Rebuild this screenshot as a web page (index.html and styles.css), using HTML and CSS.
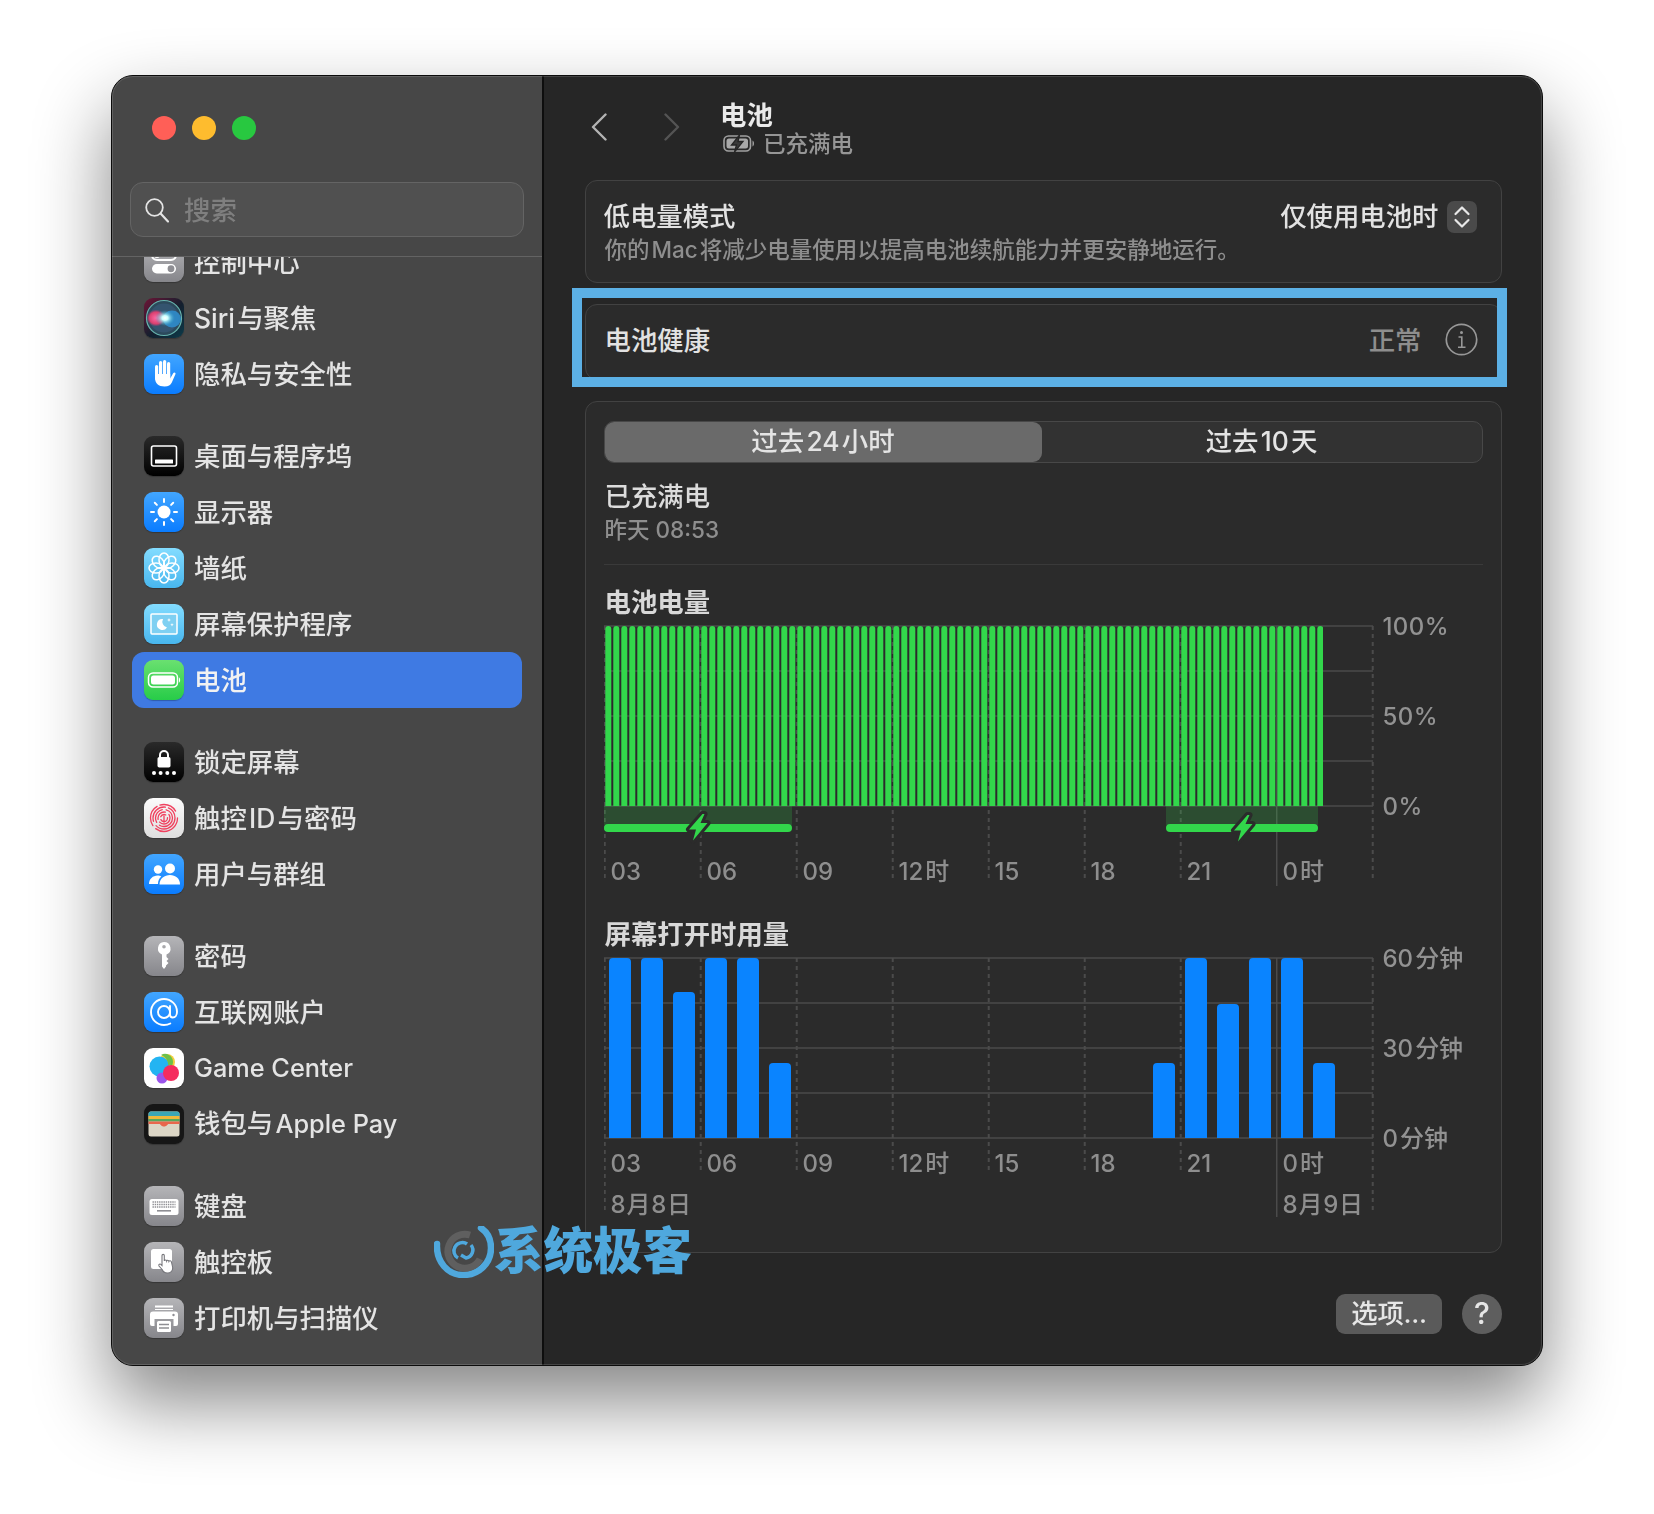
FILE: index.html
```html
<!DOCTYPE html>
<html lang="zh-CN">
<head>
<meta charset="utf-8">
<title>电池</title>
<link rel="stylesheet" href="styles.css">
</head>
<body>
<div class="window">
  <aside class="sidebar">
    <div class="side-head">
      <div class="lights"><i class="light red"></i><i class="light yellow"></i><i class="light green"></i></div>
      <div class="search">
        <svg class="search-ico" viewBox="0 0 24 24"><circle cx="9.5" cy="9.5" r="8.3" fill="none" stroke="#e4e4e4" stroke-width="1.8"/><path d="M15.6 15.6 23 23.4" stroke="#e4e4e4" stroke-width="2.2" stroke-linecap="round"/></svg>
        <span>搜索</span>
      </div>
    </div>
    <nav class="list">
      <div class="group first">
        <div class="row"><span class="ic ic-gray"><svg viewBox="0 0 40 40"><rect x="8" y="8" width="24" height="10" rx="5" fill="none" stroke="#fff" stroke-width="2"/><circle cx="13" cy="13" r="3" fill="#fff"/><rect x="8" y="22" width="24" height="9.500" rx="4.750" fill="#fff"/><circle cx="27" cy="26.750" r="3.400" fill="#8e8e93"/></svg></span><span>控制中心</span></div>
        <div class="row"><span class="ic ic-siri"><svg viewBox="0 0 40 40"><defs><radialGradient id="sg1"><stop offset="0" stop-color="#fff"/><stop offset=".3" stop-color="#cff"/><stop offset="1" stop-color="#2fa6c8" stop-opacity="0"/></radialGradient><radialGradient id="sg2"><stop offset="0" stop-color="#ff6aa5"/><stop offset=".7" stop-color="#d9406f"/><stop offset="1" stop-color="#b8386f" stop-opacity="0"/></radialGradient></defs><circle cx="20" cy="20" r="17.500" fill="#2c4a5c" stroke="#67b3ad" stroke-width="1.200"/><circle cx="20" cy="20" r="14.500" fill="#34546f"/><ellipse cx="12" cy="20" rx="9.500" ry="8.500" fill="url(#sg2)"/><ellipse cx="28" cy="21" rx="9" ry="8.500" fill="#2f8fd0" opacity=".85"/><ellipse cx="21" cy="20" rx="10" ry="8" fill="url(#sg1)"/></svg></span><span>Siri&#8202;与聚焦</span></div>
        <div class="row"><span class="ic ic-blue"><svg viewBox="0 0 40 40"><g fill="#fff"><rect x="11" y="11" width="3.200" height="15" rx="1.600"/><rect x="15" y="7" width="3.200" height="18" rx="1.600"/><rect x="19" y="6" width="3.200" height="18" rx="1.600"/><rect x="23" y="8" width="3.200" height="17" rx="1.600"/><path d="M11 20h15.200v4.500l3-5.300c.9-1.600 3-.6 2.200 1.100l-3.600 8.200C26.500 31 24.500 32.500 20.500 32.500 14.500 32.500 11 29 11 24z"/></g></svg></span><span>隐私与安全性</span></div>
      </div>
      <div class="group">
        <div class="row"><span class="ic ic-black"><svg viewBox="0 0 40 40"><rect x="7.500" y="10" width="25" height="20" rx="2" fill="none" stroke="#fff" stroke-width="1.600"/><rect x="11" y="23.500" width="18" height="4" rx=".6" fill="#fff"/></svg></span><span>桌面与程序坞</span></div>
        <div class="row"><span class="ic ic-blue"><svg viewBox="0 0 40 40"><circle cx="20" cy="20" r="6.500" fill="#fff"/><g stroke="#fff" stroke-width="2" stroke-linecap="round"><path d="M20 7v3M20 30v3M7 20h3M30 20h3M10.800 10.800l2.100 2.100M27.100 27.100l2.100 2.100M29.200 10.800l-2.100 2.100M12.900 27.100l-2.100 2.100"/></g></svg></span><span>显示器</span></div>
        <div class="row"><span class="ic ic-sky"><svg viewBox="0 0 40 40"><g fill="none" stroke="#fff" stroke-width="1.500"><ellipse cx="20" cy="12" rx="5" ry="7"/><ellipse cx="20" cy="28" rx="5" ry="7"/><ellipse cx="12" cy="20" rx="7" ry="5"/><ellipse cx="28" cy="20" rx="7" ry="5"/><ellipse cx="14.300" cy="14.300" rx="5" ry="7" transform="rotate(-45 14.300 14.300)"/><ellipse cx="25.700" cy="25.700" rx="5" ry="7" transform="rotate(-45 25.700 25.700)"/><ellipse cx="25.700" cy="14.300" rx="5" ry="7" transform="rotate(45 25.700 14.300)"/><ellipse cx="14.300" cy="25.700" rx="5" ry="7" transform="rotate(45 14.300 25.700)"/></g></svg></span><span>墙纸</span></div>
        <div class="row"><span class="ic ic-sky"><svg viewBox="0 0 40 40"><rect x="7" y="10" width="26" height="20" rx="1" fill="#7fd0f2" stroke="#fff" stroke-width="1.500"/><path d="M19 15a5.500 5.500 0 1 0 4 8.500 6 6 0 0 1-4-8.500z" fill="#fff"/><path d="M25 14l.6 1.400 1.400.6-1.400.6-.6 1.400-.6-1.400-1.400-.6 1.400-.6zM28 19l.5 1.200 1.200.5-1.200.5-.5 1.200-.5-1.200-1.200-.5 1.200-.5z" fill="#fff"/></svg></span><span>屏幕保护程序</span></div>
        <div class="row selected"><span class="ic ic-green"><svg viewBox="0 0 40 40"><rect x="4.500" y="13" width="29" height="14" rx="4.500" fill="none" stroke="#fff" stroke-width="1.500"/><rect x="7" y="15.500" width="24" height="9" rx="2.500" fill="#fff"/><path d="M35 17.500c1.500.4 1.500 4.600 0 5z" fill="#fff"/></svg></span><span>电池</span></div>
      </div>
      <div class="group">
        <div class="row"><span class="ic ic-black"><svg viewBox="0 0 40 40"><path d="M16 16v-3a4 4 0 0 1 8 0v3" fill="none" stroke="#fff" stroke-width="2"/><rect x="13.500" y="15" width="13" height="10.500" rx="1.800" fill="#fff"/><g fill="#fff"><circle cx="10" cy="31" r="2"/><circle cx="16.600" cy="31" r="2"/><circle cx="23.300" cy="31" r="2"/><circle cx="30" cy="31" r="2"/></g></svg></span><span>锁定屏幕</span></div>
        <div class="row"><span class="ic ic-white"><svg viewBox="0 0 40 40"><g fill="none" stroke="#f0405e" stroke-width="1.300" stroke-linecap="round"><circle cx="20" cy="20" r="13.500" stroke-dasharray="30 4 22 3 18 8"/><circle cx="20" cy="20" r="11" stroke-dasharray="26 5 22 3"/><circle cx="20" cy="20" r="8.500" stroke-dasharray="18 4 16 4"/><circle cx="20" cy="20" r="6" stroke-dasharray="14 3 12 4"/><circle cx="20" cy="20" r="3.500" stroke-dasharray="9 3 6 3"/><path d="M20 18v6"/></g></svg></span><span>触控&#8202;ID&#8202;与密码</span></div>
        <div class="row"><span class="ic ic-blue"><svg viewBox="0 0 40 40"><g fill="#fff"><circle cx="14" cy="15.500" r="4.200"/><circle cx="26" cy="14.500" r="5"/><path d="M5 30c0-5 4-8.500 8.500-8.500 1.600 0 2.800.4 3.800 1-2.200 1.900-3.300 4.400-3.300 7.500z"/><path d="M15.500 30.500c0-6 5-9.500 10.500-9.500s10 3.500 10 9.500z"/></g></svg></span><span>用户与群组</span></div>
      </div>
      <div class="group">
        <div class="row"><span class="ic ic-gray"><svg viewBox="0 0 40 40"><path fill="#fff" fill-rule="evenodd" d="M20 6a6.500 6.500 0 0 1 2.500 12.500V21l2 2-2 2 2 2-2.500 2.500v1L20 33l-2-2.500V18.500A6.500 6.500 0 0 1 20 6zm0 3a1.800 1.800 0 1 0 0 3.600A1.800 1.800 0 0 0 20 9z"/></svg></span><span>密码</span></div>
        <div class="row"><span class="ic ic-blue"><svg viewBox="0 0 40 40"><g fill="none" stroke="#fff" stroke-width="1.900" stroke-linecap="round"><circle cx="20" cy="20" r="6"/><path d="M26 14v8.500c0 2 1.300 3 2.800 3 2.400 0 4.200-2.500 4.200-5.800C33 12.500 27 7 20 7 12.500 7 7 13 7 20s5.500 13 13 13c2.500 0 4.500-.5 6.300-1.500"/></g></svg></span><span>互联网账户</span></div>
        <div class="row"><span class="ic ic-white2"><svg viewBox="0 0 40 40"><circle cx="23" cy="14" r="8" fill="#f4cf3c"/><circle cx="15.500" cy="18.500" r="10" fill="#23b4f2"/><path d="M17 7a8 8 0 0 1 12 7 8 8 0 0 1-1 3.800 8 8 0 0 0-4-1 10 10 0 0 0-7-9.800z" fill="#6cc04a"/><circle cx="18" cy="30" r="5.500" fill="#9a54ea"/><circle cx="27" cy="25" r="8" fill="#f52c5e"/></svg></span><span class="lat">Game Center</span></div>
        <div class="row"><span class="ic ic-black ic-wallet"><svg viewBox="0 0 40 40"><rect x="4.500" y="7.500" width="31" height="25" rx="2.500" fill="#dcd6c6"/><path d="M4.500 10a2.500 2.500 0 0 1 2.500-2.500h26a2.500 2.500 0 0 1 2.500 2.500v2h-31z" fill="#3aa7b5"/><rect x="4.500" y="12" width="31" height="3" fill="#eeb93a"/><rect x="4.500" y="15" width="31" height="2.500" fill="#56a85c"/><path d="M4.500 17.500h31V20H24.500c-1 0-1.500 2.500-4.500 2.500S16.500 20 15.500 20h-11z" fill="#e9664c"/></svg></span><span>钱包与&#8202;<span class="lat">Apple Pay</span></span></div>
      </div>
      <div class="group">
        <div class="row"><span class="ic ic-gray"><svg viewBox="0 0 40 40"><rect x="5.500" y="13" width="29" height="16" rx="2.500" fill="#fff"/><g fill="none" stroke="#8e8e93" stroke-width="1.300" stroke-dasharray="1.400 .8"><path d="M8.500 16h23M8.500 18.500h23M8.500 21h23"/></g><rect x="13" y="24" width="14" height="1.600" fill="#8e8e93"/></svg></span><span>键盘</span></div>
        <div class="row"><span class="ic ic-gray"><svg viewBox="0 0 40 40"><rect x="7" y="7" width="21" height="20" rx="2.500" fill="#fff"/><path d="M18 13.500c0-1.500 2.300-1.500 2.300 0V19c.2-1.300 2-1.300 2.300 0 .3-1 2-1 2.300.3.300-.8 2.200-.8 2.500.5.500 2.500 1.200 4 1.300 6.200.1 3-2 5-5.300 5-3.400 0-4.600-1.600-5.300-3.500L15 24c-.8-1.600 1-2.600 2-1.500l1 1z" fill="#fff" stroke="#77777c" stroke-width="1.100"/></svg></span><span>触控板</span></div>
        <div class="row"><span class="ic ic-gray"><svg viewBox="0 0 40 40"><path d="M11 7.500h18v2H11zM11 11h18v1H11z" fill="#fff"/><path d="M9 13.500h22a3 3 0 0 1 3 3V26a2 2 0 0 1-2 2h-2.500v-7h-19v7H8a2 2 0 0 1-2-2v-9.500a3 3 0 0 1 3-3z" fill="#fff"/><rect x="13" y="23" width="14" height="11" rx="1.500" fill="#fff"/><path d="M15 26.500h10M15 30h10" stroke="#8e8e93" stroke-width="1.500"/><circle cx="29.500" cy="17" r="1.200" fill="#8e8e93"/></svg></span><span>打印机与扫描仪</span></div>
      </div>
    </nav>
  </aside>

  <main class="main">
    <header class="top">
      <svg class="chev" viewBox="0 0 16 28"><path d="M14.500 1.500 2 14l12.500 12.500" fill="none" stroke="#b3b3b3" stroke-width="2.400" stroke-linecap="round" stroke-linejoin="round"/></svg>
      <svg class="chev chev-next" viewBox="0 0 16 28"><path d="M1.500 1.500 14 14 1.500 26.500" fill="none" stroke="#545454" stroke-width="2.400" stroke-linecap="round" stroke-linejoin="round"/></svg>
      <div class="heading">
        <div class="title">电池</div>
        <div class="subtitle">
          <svg class="bat" viewBox="0 0 32 17"><rect x="1" y="1" width="26.500" height="15" rx="4.500" fill="#2a2a2a" stroke="#a0a0a0" stroke-width="1.600"/><rect x="3.500" y="3.500" width="21.500" height="10" rx="2.500" fill="#a8a8a8"/><path d="M16.500 0 8.500 10h5L11.500 17l8.500-10.500h-5z" fill="#3a3a3a" stroke="#262626" stroke-width="1.300"/><path d="M29.500 5.500c2 .7 2 5.300 0 6z" fill="#a0a0a0"/></svg>
          <span>已充满电</span>
        </div>
      </div>
    </header>

    <section class="card card-low">
      <div class="low-row">
        <span class="label">低电量模式</span>
        <span class="picker"><span>仅使用电池时</span>
          <svg class="stepper" viewBox="0 0 30 32"><path d="M8.500 13 15 6.500l6.500 6.500M8.500 19l6.500 6.500 6.500-6.500" fill="none" stroke="#e8e8e8" stroke-width="2.200" stroke-linecap="round" stroke-linejoin="round"/></svg>
        </span>
      </div>
      <p class="desc">你的&#8202;Mac&#8202;将减少电量使用以提高电池续航能力并更安静地运行。</p>
    </section>

    <section class="card card-health">
      <span class="label">电池健康</span>
      <span class="status">正常</span>
      <svg class="info" viewBox="0 0 33 33"><circle cx="16.500" cy="16.500" r="15.200" fill="none" stroke="#989898" stroke-width="1.700"/><circle cx="16.500" cy="9.500" r="1.500" fill="#989898"/><path d="M13.500 14h3.300v10M13 24.200h7.500" fill="none" stroke="#989898" stroke-width="1.600"/></svg>
      <div class="mark"></div>
    </section>

    <section class="card card-usage">
      <div class="seg">
        <div class="seg-item on">过去&#8202;24&#8202;小时</div>
        <div class="seg-item">过去&#8202;10&#8202;天</div>
      </div>
      <div class="state">已充满电</div>
      <div class="state-time">昨天 08:53</div>
      <hr class="rule">

      <h2 class="chart-title">电池电量</h2>
      <div class="chart">
        <svg class="plot plot-a" viewBox="0 0 770 262">
          <defs>
            <pattern id="gb" width="8" height="180" patternUnits="userSpaceOnUse" x="0" y="1"><path d="M1.300 180V3a3 3 0 0 1 6 0v177z" fill="#32d74b"/></pattern>
            <path id="bolt" d="M4.500-12-9 3.500h7L-5 14.500 9.500-3H2.500L6.500-12z" fill="#32d74b" stroke="#2b2b2b" stroke-width="6" stroke-linejoin="round" paint-order="stroke"/>
          </defs>
          <g class="gh"><path d="M0 1H769M0 46H769M0 91H769M0 136H769M0 181H769"/></g>
          <g class="gv"><path d="M.75 1V257M96.750 1V257M192.750 1V257M288.750 1V257M384.750 1V257M480.750 1V257M576.750 1V257M768.750 1V257"/></g>
          <path class="gs" d="M672.750 1V261"/>
          <rect x="0" y="1" width="719" height="180" fill="url(#gb)"/>
          <rect class="chg-bg" x="0" y="181" width="188" height="19"/>
          <rect class="chg-bg" x="562" y="181" width="152" height="19"/>
          <rect class="chg" x="0" y="199" width="188" height="8" rx="4"/>
          <rect class="chg" x="562" y="199" width="152" height="8" rx="4"/>
          <use href="#bolt" x="94" y="201"/>
          <use href="#bolt" x="639" y="202"/>
        </svg>
        <div class="axis axis-pct"><span>100%</span><span>50%</span><span>0%</span></div>
      </div>
      <div class="ticks ticks-a"><span>03</span><span>06</span><span>09</span><span>12&#8202;时</span><span>15</span><span>18</span><span>21</span><span>0&#8202;时</span></div>

      <h2 class="chart-title title-b">屏幕打开时用量</h2>
      <div class="chart">
        <svg class="plot plot-b" viewBox="0 0 770 260">
          <g class="gh"><path d="M0 1H769M0 46H769M0 91H769M0 136H769M0 181H769"/></g>
          <g class="gv"><path d="M.75 1V256M96.750 1V216M192.750 1V216M288.750 1V216M384.750 1V216M480.750 1V216M576.750 1V216M768.750 1V256"/></g>
          <path class="gs" d="M672.750 1V260"/>
          <g class="blue">
            <path d="M5 181V5a4 4 0 0 1 4-4h14a4 4 0 0 1 4 4v176z"/>
            <path d="M37 181V5a4 4 0 0 1 4-4h14a4 4 0 0 1 4 4v176z"/>
            <path d="M69 181V39a4 4 0 0 1 4-4h14a4 4 0 0 1 4 4v142z"/>
            <path d="M101 181V5a4 4 0 0 1 4-4h14a4 4 0 0 1 4 4v176z"/>
            <path d="M133 181V5a4 4 0 0 1 4-4h14a4 4 0 0 1 4 4v176z"/>
            <path d="M165 181V110a4 4 0 0 1 4-4h14a4 4 0 0 1 4 4v71z"/>
            <path d="M549 181V110a4 4 0 0 1 4-4h14a4 4 0 0 1 4 4v71z"/>
            <path d="M581 181V5a4 4 0 0 1 4-4h14a4 4 0 0 1 4 4v176z"/>
            <path d="M613 181V51a4 4 0 0 1 4-4h14a4 4 0 0 1 4 4v130z"/>
            <path d="M645 181V5a4 4 0 0 1 4-4h14a4 4 0 0 1 4 4v176z"/>
            <path d="M677 181V5a4 4 0 0 1 4-4h14a4 4 0 0 1 4 4v176z"/>
            <path d="M709 181V110a4 4 0 0 1 4-4h14a4 4 0 0 1 4 4v71z"/>
          </g>
        </svg>
        <div class="axis"><span>60&#8202;分钟</span><span>30&#8202;分钟</span><span>0&#8202;分钟</span></div>
      </div>
      <div class="ticks ticks-b"><span>03</span><span>06</span><span>09</span><span>12&#8202;时</span><span>15</span><span>18</span><span>21</span><span>0&#8202;时</span></div>
      <div class="ticks dates"><span>8月8日</span><span class="date-end">8月9日</span></div>
    </section>

    <footer class="actions">
      <button class="btn">选项...</button>
      <button class="help">?</button>
    </footer>
  </main>

  <div class="watermark">
    <svg class="wm-logo" viewBox="0 0 60 52"><path d="M3 18C2 36 14 49 29 49 44 49 57 38 57 22 57 13 53 6 47 2" fill="none" stroke="#4fa8dd" stroke-width="6.500" stroke-linecap="round"/><path d="M46 33A17 17 0 1 1 36 9" fill="none" stroke="#5f5f5f" stroke-width="7"/><path d="M24 32a8 8 0 0 1-3-11c2-4 8-6 12-3M37 19a8 8 0 0 1-5 13l-5-3" fill="none" stroke="#4fa8dd" stroke-width="3.500"/></svg>
    <span>系统极客</span>
  </div>
</div>
</body>
</html>
```

FILE: styles.css
```css
* { box-sizing: border-box; }
html, body { margin: 0; padding: 0; }
body {
  width: 1654px;
  height: 1514px;
  padding: 75px 111px 0;
  background: #fff;
  overflow: hidden;
  font-family: Inter, "Noto Sans CJK SC", sans-serif;
  font-size: 26.4px;
  line-height: 36px;
  font-weight: 500;
  color: #e2e2e2;
}
.window {
  position: relative;
  width: 1432px;
  height: 1291px;
  display: flex;
  border: 1px solid #0c0c0c;
  border-radius: 22px;
  background: #262626;
  filter: drop-shadow(0 36px 38px rgba(0,0,0,.48));
}
.window::after {
  content: "";
  position: absolute;
  inset: 0;
  border-radius: 21px;
  box-shadow: inset 0 0 0 1px rgba(255,255,255,.14);
  pointer-events: none;
}

/* sidebar */
.sidebar {
  width: 432px;
  flex: none;
  display: flex;
  flex-direction: column;
  background: #474747;
  border-right: 2px solid #0e0e0e;
  border-radius: 21px 0 0 21px;
  overflow: hidden;
}
.side-head {
  padding: 40px 18px 19px;
  border-bottom: 1.5px solid #636363;
  flex: none;
}
.lights { display: flex; gap: 16px; padding-left: 22px; }
.light { width: 24px; height: 24px; border-radius: 50%; }
.red { background: #ff5f57; }
.yellow { background: #febc2e; }
.green { background: #28c840; }
.search {
  margin-top: 42px;
  height: 55px;
  display: flex;
  align-items: center;
  gap: 15px;
  padding-left: 14px;
  background: #505050;
  border: 1px solid #646464;
  border-radius: 13px;
  color: #7f7f7f;
}
.search-ico { width: 24px; height: 26px; flex: none; }
.list { flex: 1; overflow: hidden; }
.group { margin-bottom: 26px; }
.group.first { margin-top: -23.5px; }
.row {
  height: 56px;
  margin: 0 20px;
  padding-left: 12px;
  display: flex;
  align-items: center;
  gap: 10px;
  border-radius: 12px;
  color: #e4e4e4;
  white-space: pre;
}
.row.selected { background: #3f7ae3; color: #f2f2f2; }
.lat { font-size: 25.3px; }
.ic {
  width: 40px;
  height: 40px;
  flex: none;
  border-radius: 9px;
  display: block;
  box-shadow: 0 1px 1px rgba(0,0,0,.25);
}
.ic svg { display: block; width: 40px; height: 40px; }
.ic-gray { background: linear-gradient(#b5b5b8, #86868b); }
.ic-blue { background: linear-gradient(#42a6ff, #0a7cff); }
.ic-black { background: linear-gradient(#2a2a2a, #000); }
.ic-sky { background: linear-gradient(#83dcff, #48b6ee); }
.ic-green { background: linear-gradient(#6ae070, #27cc48); }
.ic-white { background: linear-gradient(#fbfbfb, #dedede); }
.ic-white2 { background: #fff; }
.ic-siri { background: linear-gradient(135deg, #6d1436, #131f2e 55%, #0c3b4a); }
.ic-wallet { background: #161616; }

/* main */
.main {
  flex: 1;
  min-width: 0;
  padding: 0 39px 0 40.5px;
  display: flex;
  flex-direction: column;
}
.top {
  height: 104px;
  flex: none;
  display: flex;
  align-items: center;
  padding-left: 6px;
}
.chev { width: 16px; height: 28px; flex: none; margin-top: -2px; }
.chev-next { margin-left: 57px; }
.heading { margin-left: 40.5px; }
.title { font-size: 26.4px; line-height: 32px; font-weight: 700; color: #eaeaea; }
.subtitle {
  display: flex;
  align-items: center;
  gap: 8px;
  height: 28px;
  margin-top: -1px;
  margin-left: 3px;
  font-size: 22.5px;
  line-height: 28px;
  color: #969696;
}
.bat { width: 32px; height: 17px; flex: none; }

.card {
  width: 917.5px;
  flex: none;
  background: #2b2b2b;
  border: 1.5px solid #424242;
  border-radius: 12px;
}
.card-low { height: 103px; padding: 17px 24.5px 0 18px; }
.low-row { display: flex; justify-content: space-between; align-items: center; height: 36px; }
.label { color: #e2e2e2; }
.picker { display: flex; align-items: center; gap: 8px; color: #e2e2e2; }
.stepper { width: 30px; height: 32px; background: #4a4a4a; border-radius: 7px; margin-top: 1px; }
.desc { margin: 1px 0 0; padding-left: 1px; font-size: 22.5px; line-height: 30px; color: #8e8e8e; white-space: pre; }

.card-health {
  position: relative;
  height: 76px;
  margin-top: 21px;
  padding: 0 23.5px 5px 19px;
  display: flex;
  align-items: center;
}
.status { margin-left: auto; color: #8e8e8e; }
.info { width: 33px; height: 33px; margin-left: 23px; flex: none; }
.mark {
  position: absolute;
  top: -17.5px;
  left: -14px;
  right: -5.5px;
  bottom: -7.5px;
  border: 10px solid #5cb0e5;
}

.card-usage {
  height: 852px;
  margin-top: 21px;
  padding: 18.5px 18.5px 0 18px;
}
.seg {
  height: 42px;
  display: flex;
  background: #323232;
  border: 1px solid #484848;
  border-radius: 10px;
}
.seg-item {
  flex: 1;
  display: flex;
  align-items: center;
  justify-content: center;
  padding-bottom: 2px;
  border-radius: 9px;
  color: #e4e4e4;
  white-space: pre;
}
.seg-item.on { flex: 0 0 437px; background: #6a6a6a; }
.state { margin-top: 15px; margin-bottom: 1px; padding-left: 1px; color: #dcdcdc; }
.state-time { font-size: 22.5px; line-height: 30px; padding-left: 1px; color: #8e8e8e; }
.rule { margin: 19px 0 19px; border: 0; border-top: 1.5px solid #3a3a3a; }
.chart-title { margin: 0 0 5px; padding-left: 1px; font-size: 26.4px; line-height: 36px; font-weight: 700; color: #d8d8d8; }
.chart { display: flex; align-items: flex-start; }
.plot { display: block; width: 770px; flex: none; }
.plot-a { height: 262px; }
.plot-b { height: 260px; }
.gh path { stroke: #4b4b4b; stroke-width: 1.5; fill: none; }
.gv path { stroke: #4b4b4b; stroke-width: 2; stroke-dasharray: 4 4; fill: none; }
.gs { stroke: #4b4b4b; stroke-width: 1.5; fill: none; }
.chg-bg { fill: rgba(50, 215, 75, .2); }
.chg { fill: #32d74b; }
.blue path { fill: #0a84ff; }
.axis {
  height: 204px;
  margin: -10px 0 0 9px;
  display: flex;
  flex-direction: column;
  justify-content: space-between;
  font-size: 24px;
  line-height: 24px;
  font-weight: 500;
  color: #929292;
  white-space: pre;
}
.axis-pct { letter-spacing: .4px; }
.ticks {
  display: grid;
  grid-template-columns: repeat(8, 96px);
  padding-left: 7px;
  height: 30px;
  font-size: 24px;
  line-height: 30px;
  font-weight: 500;
  color: #8e8e8e;
  white-space: pre;
}
.ticks-a { margin-top: -30px; }
.ticks-b { margin-top: -68px; }
.title-b { margin-top: 29px; }
.dates { margin-top: 11px; letter-spacing: .8px; }
.date-end { grid-column: 8; }

.actions {
  margin-top: 41px;
  width: 917.5px;
  display: flex;
  justify-content: flex-end;
  gap: 20px;
}
.btn {
  width: 106px;
  height: 40px;
  padding: 0 0 3px;
  border: 0;
  border-radius: 9px;
  background: #5a5a5a;
  color: #e6e6e6;
  font: inherit;
  letter-spacing: -.3px;
}
.help {
  width: 40px;
  height: 40px;
  padding: 0 0 3px;
  border: 0;
  border-radius: 50%;
  background: #5e5e5e;
  color: #e6e6e6;
  font: inherit;
  font-size: 30px;
}

/* watermark lying over the window */
.watermark {
  position: absolute;
  left: 322px;
  top: 1142px;
  display: flex;
  align-items: center;
  color: #4fa8dd;
  font-family: "Noto Sans CJK SC", sans-serif;
  font-size: 49.5px;
  font-weight: 900;
  line-height: 54px;
}
.wm-logo { width: 60px; height: 52px; flex: none; margin-top: 8px; }
```
